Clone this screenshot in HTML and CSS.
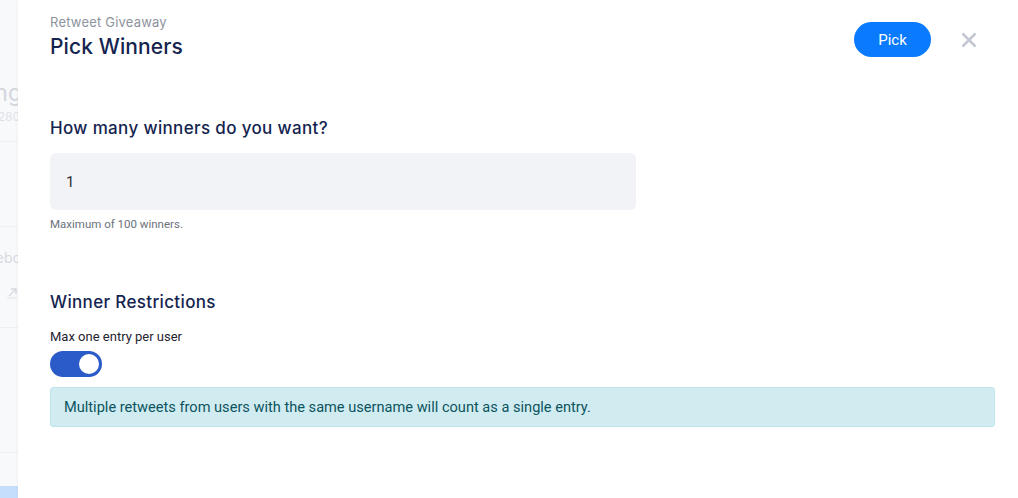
FILE: index.html
```html
<!DOCTYPE html>
<html lang="en">
<head>
<meta charset="utf-8">
<title>Pick Winners</title>
<link rel="stylesheet" href="styles.css">
</head>
<body>
<div class="layout">
  <aside class="page-peek" aria-hidden="true">
    <div class="peek-inner">
      <div class="peek-block">
        <div class="peek-title">Setting</div>
        <div class="peek-sub">ID 1280</div>
      </div>
      <div class="peek-row"></div>
      <div class="peek-row peek-tall">
        <div class="peek-label">Facebo</div>
        <div class="peek-icon">
          <svg width="12" height="12" viewBox="0 0 12 12"><path d="M3 9 L10 2 M5 2 H10 V7" fill="none" stroke="#d6d9e0" stroke-width="1.4"/><path d="M1 11 H11" stroke="#e3e5ea" stroke-width="1"/></svg>
        </div>
      </div>
      <div class="peek-row peek-big"></div>
      <div class="peek-row peek-end"></div>
      <div class="peek-bar"></div>
    </div>
  </aside>
  <main class="modal">
    <header class="modal-header">
      <div class="titles">
        <div class="eyebrow">Retweet Giveaway</div>
        <h1 class="title">Pick Winners</h1>
      </div>
      <div class="actions">
        <button class="btn-pick">Pick</button>
        <button class="btn-close" aria-label="Close">
          <svg width="16" height="16" viewBox="0 0 16 16"><path d="M1.5 1.5 L14.5 14.5 M14.5 1.5 L1.5 14.5" stroke="#c4c8d3" stroke-width="2.6" stroke-linecap="butt"/></svg>
        </button>
      </div>
    </header>

    <section class="section first">
      <h2 class="section-title">How many winners do you want?</h2>
      <div class="input">1</div>
      <div class="help">Maximum of 100 winners.</div>
    </section>

    <section class="section second">
      <h2 class="section-title">Winner Restrictions</h2>
      <div class="field-label">Max one entry per user</div>
      <div class="toggle"><span class="knob"></span></div>
      <div class="alert">Multiple retweets from users with the same username will count as a single entry.</div>
    </section>
  </main>
</div>
</body>
</html>
```

FILE: styles.css
```css
* { box-sizing: border-box; }
html, body { margin: 0; padding: 0; }
body {
  width: 1018px;
  height: 498px;
  overflow: hidden;
  font-family: Roboto, "Liberation Sans", sans-serif;
  background: #f8f9fb;
}
.layout {
  display: flex;
  height: 498px;
}
.page-peek {
  width: 18px;
  flex: none;
  overflow: hidden;
  background: #f8f9fb;
}
.peek-inner {
  width: 18px;
  display: flex;
  flex-direction: column;
  height: 498px;
  font-family: Inter, "Open Sans", sans-serif;
}
.peek-block {
  height: 142px;
  padding-top: 79px;
  border-bottom: 1px solid #eef0f3;
  display: flex;
  flex-direction: column;
  align-items: flex-end;
}
.peek-title {
  font-size: 23px;
  color: #d3d6dd;
  line-height: 28px;
  white-space: nowrap;
  margin-right: -4px;
}
.peek-sub {
  font-size: 12px;
  color: #e0e2e7;
  margin-top: 2px;
  white-space: nowrap;
  margin-right: -2px;
}
.peek-row {
  height: 85px;
  border-bottom: 1px solid #eef0f3;
}
.peek-tall {
  height: 101px;
  padding-top: 22px;
  display: flex;
  flex-direction: column;
  align-items: flex-end;
}
.peek-label {
  font-size: 14px;
  color: #d6d9e0;
  white-space: nowrap;
  margin-right: -3px;
}
.peek-icon {
  margin-top: 21px;
  display: flex;
}
.peek-big { height: 125px; }
.peek-end { flex: 1; border-bottom: none; }
.peek-bar {
  height: 12px;
  background: #c4defc;
}

.modal {
  flex: 1;
  background: #fff;
  padding: 12px 23px 0 32px;
  box-shadow: -1px 0 3px rgba(0,0,0,0.03);
}
.modal-header {
  display: flex;
  justify-content: space-between;
  align-items: flex-start;
}
.titles { display: flex; flex-direction: column; }
.eyebrow {
  font-family: Inter, "Open Sans", sans-serif;
  font-size: 13px;
  letter-spacing: 0.2px;
  color: #8e939e;
  line-height: 20px;
}
.title {
  margin: 0;
  font-family: Inter, "Open Sans", sans-serif;
  font-weight: 500;
  font-size: 21px;
  letter-spacing: 0.1px;
  line-height: 30px;
  color: #14244f;
}
.actions {
  display: flex;
  align-items: center;
  gap: 30px;
  margin-top: 10px;
  margin-right: 18px;
}
.btn-pick {
  width: 77px;
  height: 35px;
  border: none;
  border-radius: 18px;
  background: #0a7bff;
  color: #fff;
  font-family: Roboto, sans-serif;
  font-size: 15px;
  padding: 0;
}
.btn-close {
  border: none;
  background: none;
  padding: 0;
  width: 16px;
  height: 16px;
  display: flex;
}
.section { display: flex; flex-direction: column; }
.section.first { margin-top: 54px; }
.section.second { margin-top: 58px; }
.section-title {
  margin: 0;
  font-family: Inter, "Open Sans", sans-serif;
  font-weight: 500;
  font-size: 17px;
  letter-spacing: 0.35px;
  line-height: 24px;
  color: #14244f;
}
.input {
  margin-top: 13px;
  width: 586px;
  height: 57px;
  background: #f2f3f6;
  border-radius: 6px;
  padding-left: 16px;
  display: flex;
  align-items: center;
  font-size: 15px;
  color: #2b2f38;
}
.help {
  margin-top: 6px;
  font-size: 11.5px;
  line-height: 16px;
  color: #6c717b;
}
.field-label {
  margin-top: 15px;
  font-size: 13px;
  line-height: 16px;
  color: #1f2430;
}
.toggle {
  margin-top: 6px;
  width: 52px;
  height: 26px;
  border-radius: 13px;
  background: #2a5bc8;
  display: flex;
  align-items: center;
  justify-content: flex-end;
  padding-right: 3px;
}
.knob {
  width: 20px;
  height: 20px;
  border-radius: 50%;
  background: #fff;
}
.alert {
  margin-top: 10px;
  height: 40px;
  background: #d1ecf1;
  border: 1px solid #bee5eb;
  border-radius: 3px;
  padding-left: 13px;
  display: flex;
  align-items: center;
  font-size: 14.6px;
  color: #0c5460;
}
```
